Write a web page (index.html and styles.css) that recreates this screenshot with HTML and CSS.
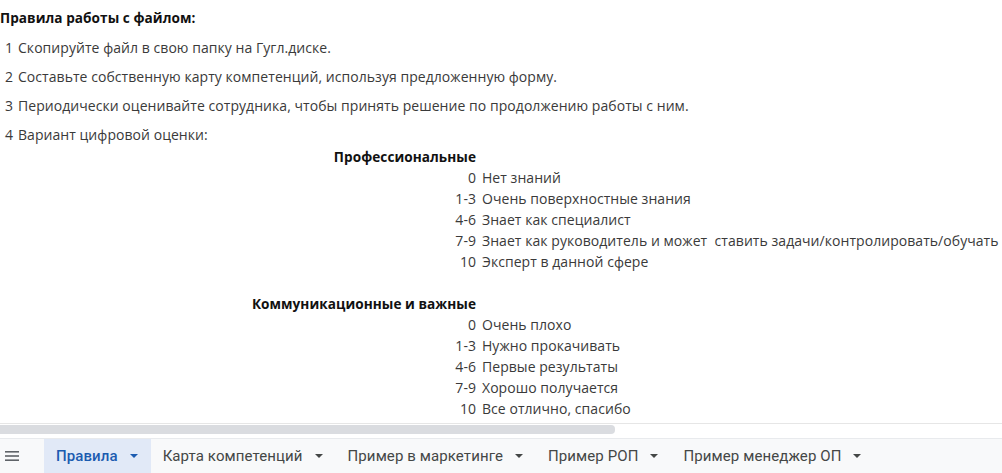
FILE: index.html
```html
<!DOCTYPE html>
<html lang="ru">
<head>
<meta charset="utf-8">
<title>Правила</title>
<link rel="stylesheet" href="styles.css">
</head>
<body>
<div class="sheet">
  <div class="content">
    <div class="title">Правила работы с файлом:</div>
    <div class="rule"><span class="rn">1</span><span class="rt">Скопируйте файл в свою папку на Гугл.диске.</span></div>
    <div class="rule"><span class="rn">2</span><span class="rt">Составьте собственную карту компетенций, используя предложенную форму.</span></div>
    <div class="rule"><span class="rn">3</span><span class="rt">Периодически оценивайте сотрудника, чтобы принять решение по продолжению работы с ним.</span></div>
    <div class="rule last"><span class="rn">4</span><span class="rt">Вариант цифровой оценки:</span></div>

    <div class="sub head"><span class="sn">Профессиональные</span></div>
    <div class="sub"><span class="sn">0</span><span class="st">Нет знаний</span></div>
    <div class="sub"><span class="sn">1-3</span><span class="st">Очень поверхностные знания</span></div>
    <div class="sub"><span class="sn">4-6</span><span class="st">Знает как специалист</span></div>
    <div class="sub"><span class="sn">7-9</span><span class="st">Знает как руководитель и может&nbsp; ставить задачи/контролировать/обучать</span></div>
    <div class="sub"><span class="sn">10</span><span class="st">Эксперт в данной сфере</span></div>
    <div class="sub"></div>
    <div class="sub head"><span class="sn">Коммуникационные и важные</span></div>
    <div class="sub"><span class="sn">0</span><span class="st">Очень плохо</span></div>
    <div class="sub"><span class="sn">1-3</span><span class="st">Нужно прокачивать</span></div>
    <div class="sub"><span class="sn">4-6</span><span class="st">Первые результаты</span></div>
    <div class="sub"><span class="sn">7-9</span><span class="st">Хорошо получается</span></div>
    <div class="sub"><span class="sn">10</span><span class="st">Все отлично, спасибо</span></div>
  </div>
  <div class="hscroll"><div class="thumb"></div></div>
  <div class="tabbar">
    <div class="menu">
      <svg width="14" height="10" viewBox="0 0 14 10"><rect x="0" y="0" width="14" height="1.6" fill="#5f6368"/><rect x="0" y="4.2" width="14" height="1.6" fill="#5f6368"/><rect x="0" y="8.4" width="14" height="1.6" fill="#5f6368"/></svg>
    </div>
    <div class="tab active">Правила<span class="caret"></span></div>
    <div class="tab">Карта компетенций<span class="caret"></span></div>
    <div class="tab">Пример в маркетинге<span class="caret"></span></div>
    <div class="tab">Пример РОП<span class="caret"></span></div>
    <div class="tab">Пример менеджер ОП<span class="caret"></span></div>
  </div>
</div>
</body>
</html>
```
FILE: styles.css
```css
html, body {
  margin: 0;
  padding: 0;
  background: #fff;
}
.sheet {
  width: 1002px;
  height: 473px;
  overflow: hidden;
  display: flex;
  flex-direction: column;
}
.content {
  height: 424px;
  font-family: "Open Sans", "Liberation Sans", sans-serif;
  font-size: 14px;
  letter-spacing: 0.05px;
  color: #3a3a3a;
  border-bottom: 1px solid #e6e6e6;
  box-sizing: border-box;
}
.title {
  height: 38px;
  line-height: 36px;
  font-size: 13.6px;
  font-weight: 700;
  color: #111;
}
.rule {
  height: 29px;
  line-height: 20px;
  display: flex;
}
.rule.last {
  height: 21px;
}
.rn {
  width: 13px;
  text-align: right;
}
.rt {
  padding-left: 5px;
  white-space: nowrap;
}
.sub {
  height: 21px;
  line-height: 21px;
  display: flex;
  white-space: nowrap;
}
.sn {
  width: 476px;
  text-align: right;
  flex: none;
}
.head .sn {
  font-weight: 700;
  font-size: 13.6px;
  color: #111;
}
.st {
  padding-left: 6px;
}
.hscroll {
  height: 14px;
  padding-top: 1px;
  box-sizing: border-box;
}
.thumb {
  width: 615px;
  height: 9px;
  background: #dadce0;
  border-radius: 0 4px 4px 0;
}
.tabbar {
  flex: 1;
  display: flex;
  align-items: stretch;
  background: #f8f9fa;
  border-top: 1px solid #e8eaed;
  font-family: Roboto, "Liberation Sans", sans-serif;
  font-size: 15px;
  color: #444746;
  letter-spacing: 0.1px;
}
.menu {
  width: 44px;
  display: flex;
  align-items: center;
  padding-left: 5px;
  box-sizing: border-box;
}
.tab {
  display: flex;
  align-items: center;
  padding: 0 13px 0 12px;
  gap: 12px;
}
.tab.active {
  background: #e1e9f7;
  color: #1b5bb0;
  font-weight: 500;
}
.caret {
  width: 0;
  height: 0;
  border-left: 4px solid transparent;
  border-right: 4px solid transparent;
  border-top: 4px solid currentColor;
}
```
